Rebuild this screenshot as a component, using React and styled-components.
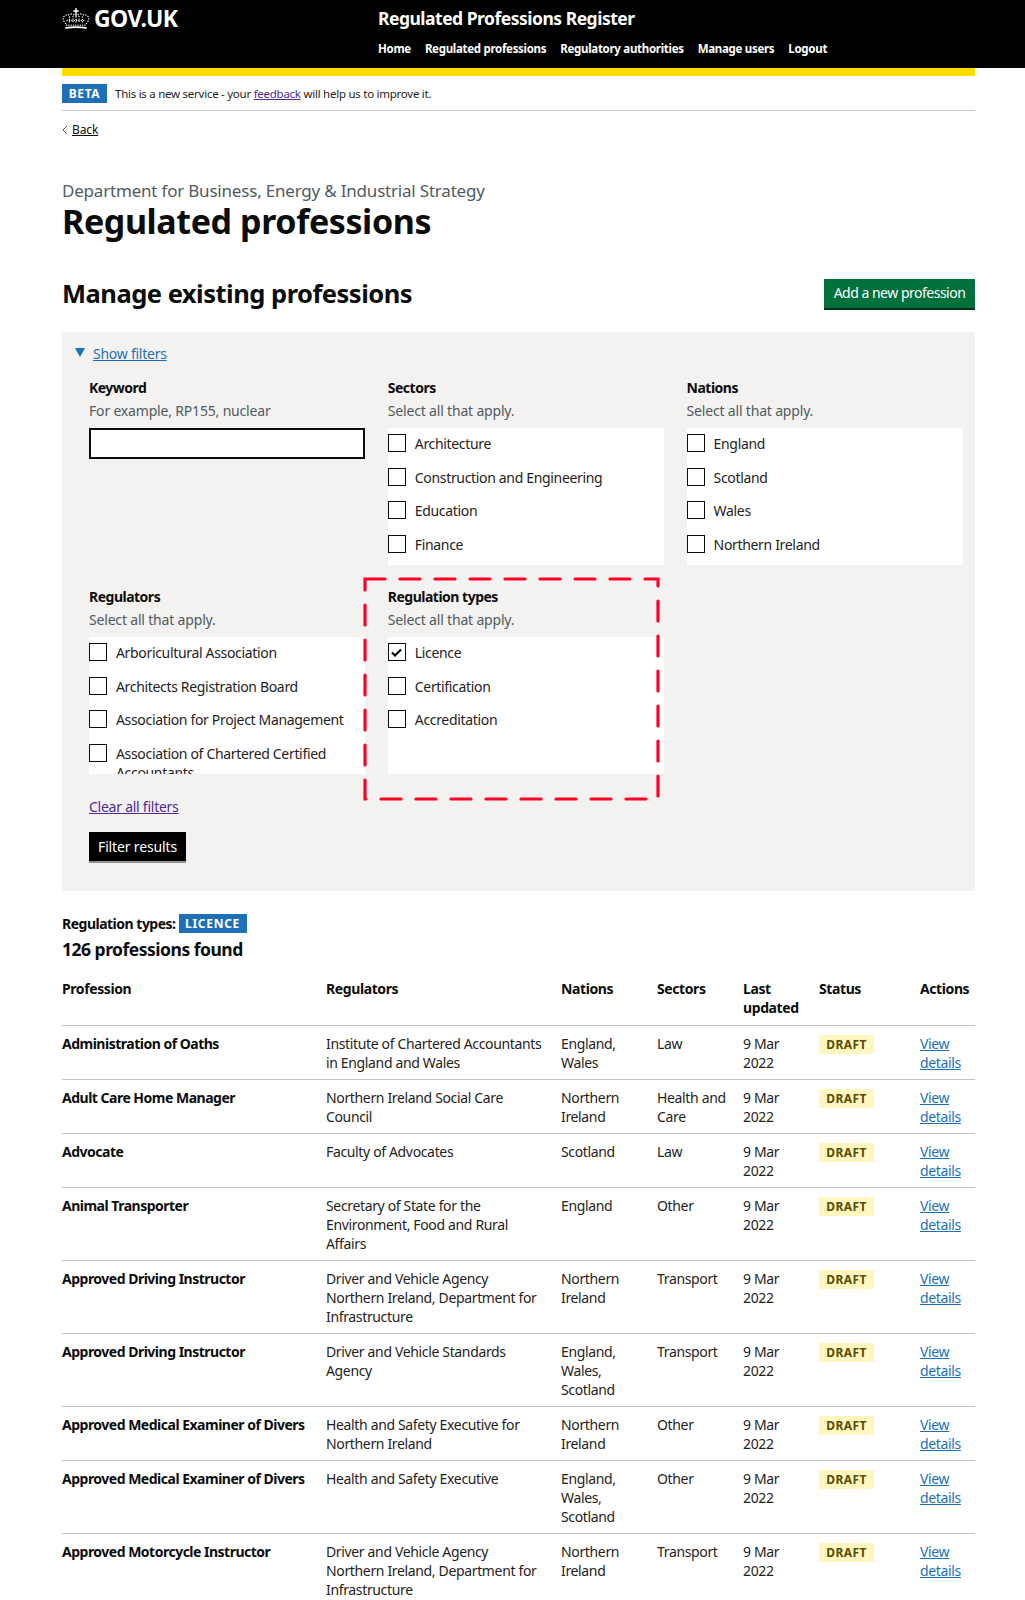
import React from 'react';
import styled, { createGlobalStyle } from 'styled-components';

const Global = createGlobalStyle`
  html, body { margin: 0; padding: 0; background: #fff; }
  body { font-family: "Noto Sans", "Liberation Sans", sans-serif; color: #0b0c0c; }
  #root { height: 1600px; overflow: hidden; }
`;

const Header = styled.header`
  background: #000;
  height: 68px;
  display: flex;
  padding-left: 62px;
  color: #fff;
`;
const Logo = styled.div`
  width: 316px;
  display: flex;
  align-items: flex-start;
  gap: 4px;
  padding-top: 5px;
  font-size: 23px;
  line-height: 26px;
  font-weight: 700;
  letter-spacing: -0.6px;
  svg { margin-top: 3px; }
`;
const ServiceCol = styled.div`
  display: flex;
  flex-direction: column;
`;
const ServiceName = styled.div`
  font-size: 17.5px;
  line-height: 24px;
  font-weight: 700;
  margin-top: 6px;
  letter-spacing: -0.5px;
`;
const Nav = styled.nav`
  display: flex;
  gap: 14px;
  margin-top: 10px;
`;
const NavItem = styled.span`
  font-size: 11.5px;
  line-height: 18px;
  font-weight: 700;
  letter-spacing: -0.3px;
`;
const Wrap = styled.div`
  margin: 0 50px 0 62px;
`;
const Yellow = styled.div`
  height: 8px;
  background: #ffdd00;
`;
const Beta = styled.div`
  display: flex;
  align-items: center;
  height: 34px;
  border-bottom: 1px solid #c8c8c8;
  font-size: 11.5px;
  letter-spacing: -0.26px;
  color: #1f2222;
`;
const BetaTag = styled.span`
  background: #1d70b8;
  color: #fff;
  font-weight: 700;
  font-size: 12px;
  letter-spacing: 0.6px;
  width: 45px;
  height: 19px;
  line-height: 19px;
  text-align: center;
  margin-right: 8px;
`;
const Visited = styled.a`
  color: #4c2c92;
  text-decoration: underline;
`;
const BackRow = styled.div`
  display: flex;
  align-items: center;
  gap: 4px;
  margin-top: 10px;
  font-size: 12px;
  line-height: 18px;
  letter-spacing: -0.1px;
  svg { display: block; }
  a { color: #0b0c0c; text-decoration: underline; }
`;
const Caption = styled.div`
  margin-top: 40px;
  font-size: 17px;
  line-height: 24px;
  color: #505a5f;
  letter-spacing: -0.2px;
`;
const Title = styled.h1`
  margin: 0;
  font-size: 34px;
  line-height: 36px;
  font-weight: 700;
  letter-spacing: -0.4px;
`;
const ManageRow = styled.div`
  display: flex;
  justify-content: space-between;
  align-items: center;
  margin-top: 34px;
  height: 40px;
`;
const Manage = styled.h2`
  margin: 0;
  font-size: 25.5px;
  line-height: 32px;
  font-weight: 700;
  letter-spacing: -0.5px;
`;
const Button = styled.button`
  font-family: inherit;
  font-size: 14px;
  line-height: 18px;
  color: #fff;
  border: 0;
  padding: 0;
  cursor: pointer;
  height: 29px;
  width: ${(p) => p.$w}px;
  background: ${(p) => p.$bg};
  box-shadow: 0 2px 0 ${(p) => p.$shadow};
  letter-spacing: ${(p) => p.$track}px;
`;
const Panel = styled.section`
  margin-top: 19px;
  height: 559px;
  background: #f3f2f1;
  padding: 11px 12px 0 13px;
  box-sizing: border-box;
`;
const Toggle = styled.div`
  display: flex;
  align-items: center;
  gap: 8px;
  height: 20px;
  font-size: 14px;
  letter-spacing: -0.25px;
  a { color: #1d70b8; text-decoration: underline; }
`;
const Triangle = styled.span`
  width: 0;
  height: 0;
  border-left: 5px solid transparent;
  border-right: 5px solid transparent;
  border-top: 9px solid #1d70b8;
  margin-bottom: 2px;
`;
const FilterGrid = styled.div`
  position: relative;
  display: grid;
  grid-template-columns: repeat(3, 276px);
  column-gap: 22.8px;
  row-gap: 22px;
  margin: 15px 0 0 14px;
`;
const Label = styled.div`
  font-size: 14px;
  line-height: 20px;
  font-weight: 700;
  letter-spacing: -0.5px;
`;
const Hint = styled.div`
  margin-top: 3px;
  font-size: 14px;
  line-height: 20px;
  color: #505a5f;
  letter-spacing: -0.18px;
`;
const TextInput = styled.input`
  display: block;
  margin-top: 7px;
  box-sizing: border-box;
  width: 276px;
  height: 31px;
  border: 2px solid #0b0c0c;
  background: #fff;
`;
const Checks = styled.div`
  margin-top: 7px;
  height: 137px;
  overflow: hidden;
  background: #fff;
  padding-top: 6px;
  box-sizing: border-box;
`;
const Check = styled.label`
  display: flex;
  gap: 9px;
  min-height: 18px;
  margin-bottom: 14.5px;
  font-size: 14px;
  line-height: 19px;
  letter-spacing: -0.33px;
  color: #1f2222;
`;
const Box = styled.span`
  flex: none;
  width: 18px;
  height: 18px;
  box-sizing: border-box;
  border: 1.6px solid #0b0c0c;
  display: flex;
  align-items: center;
  justify-content: center;
`;
const Dashed = styled.svg`
  position: absolute;
  left: 274px;
  top: 199px;
  pointer-events: none;
`;
const ClearLink = styled(Visited)`
  display: block;
  margin: 23px 0 0 14px;
  font-size: 14px;
  line-height: 20px;
  letter-spacing: -0.25px;
`;
const FilterBtnRow = styled.div`
  margin: 15px 0 0 14px;
`;
const Applied = styled.div`
  display: flex;
  align-items: center;
  gap: 3px;
  margin-top: 22px;
  height: 20px;
  font-size: 14px;
  font-weight: 700;
  letter-spacing: -0.5px;
`;
const LicenceTag = styled.span`
  background: #1d70b8;
  color: #fff;
  font-size: 12px;
  letter-spacing: 0.7px;
  width: 68px;
  height: 19px;
  line-height: 19px;
  text-align: center;
`;
const Found = styled.div`
  margin-top: 3px;
  font-size: 17.5px;
  line-height: 26px;
  font-weight: 700;
  letter-spacing: -0.5px;
`;
const Table = styled.table`
  margin-top: 12px;
  width: 913px;
  table-layout: fixed;
  border-collapse: collapse;
  font-size: 14px;
  line-height: 19px;
  letter-spacing: -0.35px;
  color: #1f2222;
`;
const Th = styled.th`
  box-sizing: border-box;
  width: ${(p) => p.$w}px;
  text-align: left;
  vertical-align: top;
  font-weight: 700;
  letter-spacing: -0.4px;
  color: #0b0c0c;
  padding: 5px 12px 8px 0;
  border-bottom: 1px solid #bfc1c3;
  &:last-child { padding-right: 0; }
`;
const Td = styled.td`
  vertical-align: top;
  padding: 8px 12px 7px 0;
  border-bottom: 1px solid #bfc1c3;
  &:first-child { font-weight: 700; letter-spacing: -0.5px; color: #0b0c0c; padding-right: 0; }
  &:last-child { padding-right: 0; }
  a { color: #1d70b8; text-decoration: underline; }
`;
const Draft = styled.span`
  display: inline-block;
  background: #fff7bf;
  color: #594d00;
  font-size: 12px;
  line-height: 19px;
  font-weight: 700;
  letter-spacing: 0.4px;
  width: 55px;
  text-align: center;
`;

// dotted crown, roughly the GOV.UK one
const Crown = () => (
  <svg width="28" height="21" viewBox="0 0 28 21" fill="none" stroke="#fff" strokeLinecap="round">
    <path d="M14 0.800v6M11.800 3h4.400" strokeWidth="1.500" />
    <path
      d="M14 8C11 5.500 8 5.500 6.500 7C4.500 6.500 1.500 7.500 1.200 10.500C1 12.500 2.500 14 3.500 15.500M14 8C17 5.500 20 5.500 21.500 7C23.500 6.500 26.500 7.500 26.800 10.500C27 12.500 25.500 14 24.500 15.500"
      strokeWidth="1.400"
      strokeDasharray="0.1 2.500"
    />
    <path d="M7.500 9v5M11 8.500v6M14 9v6M17 8.500v6M20.500 9v5M5 12.500h18" strokeWidth="1.300" strokeDasharray="0.1 2.300" />
    <path d="M4.500 17.200h19" strokeWidth="1.300" strokeDasharray="0.1 2.200" />
    <path d="M4 19.800C10 18.900 18 18.900 24 19.800" strokeWidth="1.800" />
  </svg>
);

const CheckItem = ({ label, checked }) => (
  <Check>
    <Box>
      {checked && (
        <svg width="11" height="9" viewBox="0 0 11 9">
          <path d="M1 4.500l3 3 6-6" fill="none" stroke="#0b0c0c" strokeWidth="2.2" />
        </svg>
      )}
    </Box>
    <span>{label}</span>
  </Check>
);

const CheckGroup = ({ title, items, checked }) => (
  <div>
    <Label>{title}</Label>
    <Hint>Select all that apply.</Hint>
    <Checks>
      {items.map((i) => (
        <CheckItem key={i} label={i} checked={checked === i} />
      ))}
    </Checks>
  </div>
);

const rows = [
  ['Administration of Oaths', ['Institute of Chartered Accountants', 'in England and Wales'], ['England,', 'Wales'], ['Law']],
  ['Adult Care Home Manager', ['Northern Ireland Social Care', 'Council'], ['Northern', 'Ireland'], ['Health and', 'Care']],
  ['Advocate', ['Faculty of Advocates'], ['Scotland'], ['Law']],
  ['Animal Transporter', ['Secretary of State for the', 'Environment, Food and Rural', 'Affairs'], ['England'], ['Other']],
  ['Approved Driving Instructor', ['Driver and Vehicle Agency', 'Northern Ireland, Department for', 'Infrastructure'], ['Northern', 'Ireland'], ['Transport']],
  ['Approved Driving Instructor', ['Driver and Vehicle Standards', 'Agency'], ['England,', 'Wales,', 'Scotland'], ['Transport']],
  ['Approved Medical Examiner of Divers', ['Health and Safety Executive for', 'Northern Ireland'], ['Northern', 'Ireland'], ['Other']],
  ['Approved Medical Examiner of Divers', ['Health and Safety Executive'], ['England,', 'Wales,', 'Scotland'], ['Other']],
  ['Approved Motorcycle Instructor', ['Driver and Vehicle Agency', 'Northern Ireland, Department for', 'Infrastructure'], ['Northern', 'Ireland'], ['Transport']],
];

const Lines = ({ parts }) =>
  parts.map((p, i) => (
    <React.Fragment key={p}>
      {i > 0 && <br />}
      {p}
    </React.Fragment>
  ));

export default function App() {
  return (
    <>
      <Global />
      <Header>
        <Logo>
          <Crown />
          GOV.UK
        </Logo>
        <ServiceCol>
          <ServiceName>Regulated Professions Register</ServiceName>
          <Nav>
            <NavItem>Home</NavItem>
            <NavItem>Regulated professions</NavItem>
            <NavItem>Regulatory authorities</NavItem>
            <NavItem>Manage users</NavItem>
            <NavItem>Logout</NavItem>
          </Nav>
        </ServiceCol>
      </Header>
      <Wrap>
        <Yellow />
        <Beta>
          <BetaTag>BETA</BetaTag>
          <span>
            This is a new service - your <Visited href="#">feedback</Visited> will help us to improve it.
          </span>
        </Beta>
        <BackRow>
          <svg width="6" height="10" viewBox="0 0 6 10">
            <path d="M5 1L1 5l4 4" fill="none" stroke="#505a5f" strokeWidth="1" />
          </svg>
          <a href="#">Back</a>
        </BackRow>
        <Caption>Department for Business, Energy &amp; Industrial Strategy</Caption>
        <Title>Regulated professions</Title>
        <ManageRow>
          <Manage>Manage existing professions</Manage>
          <Button $w={151} $bg="#00703c" $shadow="#002d18" $track={-0.5}>Add a new profession</Button>
        </ManageRow>
        <Panel>
          <Toggle>
            <Triangle />
            <a href="#">Show filters</a>
          </Toggle>
          <FilterGrid>
            <div>
              <Label>Keyword</Label>
              <Hint>For example, RP155, nuclear</Hint>
              <TextInput />
            </div>
            <CheckGroup title="Sectors" items={['Architecture', 'Construction and Engineering', 'Education', 'Finance']} />
            <CheckGroup title="Nations" items={['England', 'Scotland', 'Wales', 'Northern Ireland']} />
            <CheckGroup
              title="Regulators"
              items={['Arboricultural Association', 'Architects Registration Board', 'Association for Project Management', 'Association of Chartered Certified Accountants']}
            />
            <CheckGroup title="Regulation types" items={['Licence', 'Certification', 'Accreditation']} checked="Licence" />
            <Dashed width="298" height="224" viewBox="0 0 298 224">
              <rect x="2" y="2" width="293" height="220" fill="none" stroke="#ff0026" strokeWidth="3.2" strokeLinecap="round" strokeDasharray="20 15" />
            </Dashed>
          </FilterGrid>
          <ClearLink href="#">Clear all filters</ClearLink>
          <FilterBtnRow>
            <Button $w={97} $bg="#000" $shadow="#929191" $track={-0.15}>Filter results</Button>
          </FilterBtnRow>
        </Panel>
        <Applied>
          Regulation types: <LicenceTag>LICENCE</LicenceTag>
        </Applied>
        <Found>126 professions found</Found>
        <Table>
          <thead>
            <tr>
              <Th $w={264}>Profession</Th>
              <Th $w={235}>Regulators</Th>
              <Th $w={96}>Nations</Th>
              <Th $w={86}>Sectors</Th>
              <Th $w={76}>Last updated</Th>
              <Th $w={101}>Status</Th>
              <Th $w={55}>Actions</Th>
            </tr>
          </thead>
          <tbody>
            {rows.map((r, i) => (
              <tr key={i}>
                <Td>{r[0]}</Td>
                <Td><Lines parts={r[1]} /></Td>
                <Td><Lines parts={r[2]} /></Td>
                <Td><Lines parts={r[3]} /></Td>
                <Td>9 Mar<br />2022</Td>
                <Td><Draft>DRAFT</Draft></Td>
                <Td><a href="#">View details</a></Td>
              </tr>
            ))}
          </tbody>
        </Table>
      </Wrap>
    </>
  );
}
